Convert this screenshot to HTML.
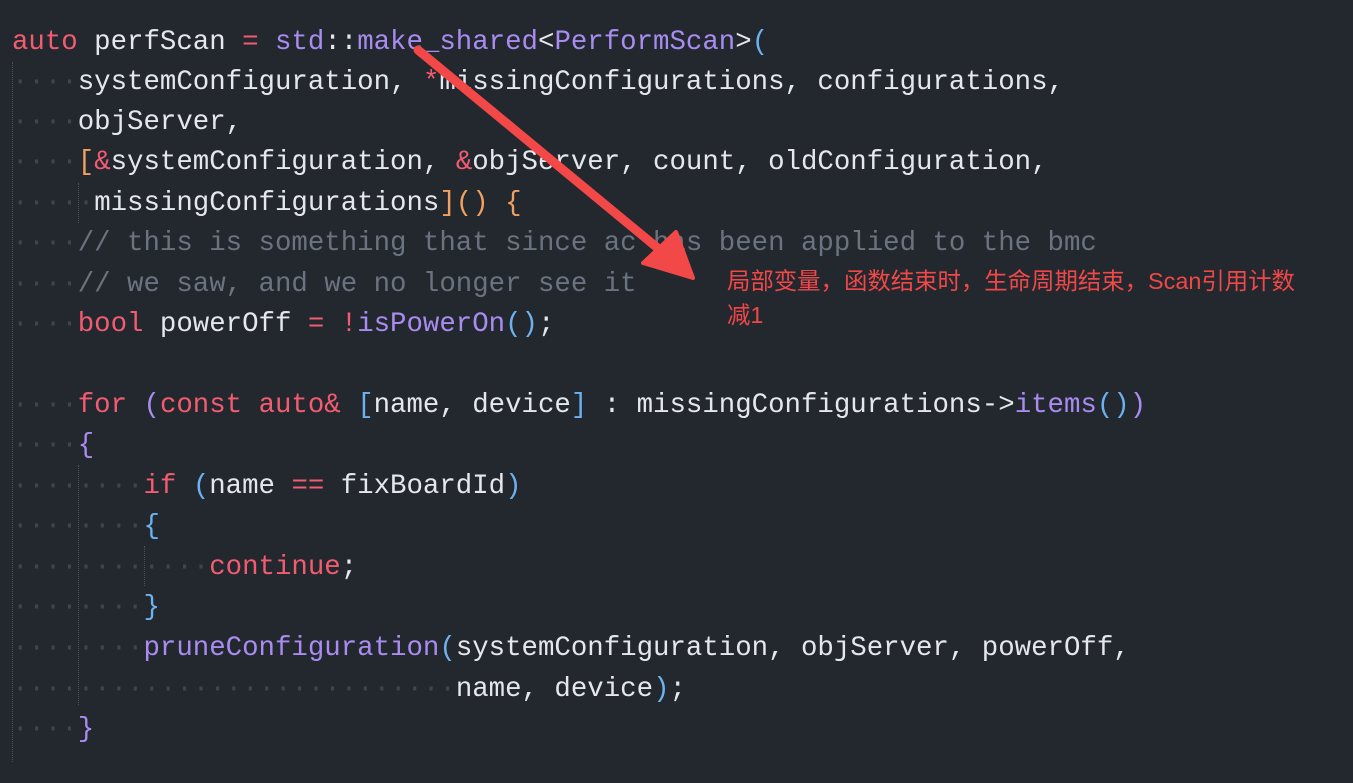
<!DOCTYPE html>
<html><head><meta charset="utf-8"><style>
html,body{margin:0;padding:0;background:#23272e;width:1353px;height:783px;overflow:hidden}
.c{position:absolute;left:12px;top:2px;font-family:"Liberation Mono",monospace;font-size:27.4px;color:#e4e7ec;white-space:pre}
.l{position:absolute;left:0;height:40px;line-height:40px}
.d{color:#3f444d}.k{color:#f25c71}.p{color:#a88cf0}.o{color:#f0a060}.b{color:#6cb2f0}.m{color:#6b7380}
.g{position:absolute;width:1px;border-left:1px dotted #4a4f58}
.note{position:absolute;left:727px;top:264px;color:#f04848;font-family:"Liberation Sans","Noto Sans CJK SC",sans-serif;font-size:23.4px;line-height:34px;width:640px}
</style></head><body>
<div class="c">
<div class="l" style="top:21px"><span class="k">auto</span> perfScan <span class="k">=</span> <span class="p">std</span>::<span class="p">make_shared</span>&lt;<span class="p">PerformScan</span>&gt;<span class="b">(</span></div>
<div class="l" style="top:61px"><span class="d">····</span>systemConfiguration, <span class="k">*</span>missingConfigurations, configurations,</div>
<div class="l" style="top:101px"><span class="d">····</span>objServer,</div>
<div class="l" style="top:141px"><span class="d">····</span><span class="o">[</span><span class="k">&amp;</span>systemConfiguration, <span class="k">&amp;</span>objServer, count, oldConfiguration,</div>
<div class="l" style="top:182px"><span class="d">·····</span>missingConfigurations<span class="o">]()</span> <span class="o">{</span></div>
<div class="l" style="top:222px"><span class="d">····</span><span class="m">// this is something that since ac has been applied to the bmc</span></div>
<div class="l" style="top:263px"><span class="d">····</span><span class="m">// we saw, and we no longer see it</span></div>
<div class="l" style="top:303px"><span class="d">····</span><span class="k">bool</span> powerOff <span class="k">=</span> <span class="k">!</span><span class="p">isPowerOn</span><span class="b">()</span>;</div>
<div class="l" style="top:384px"><span class="d">····</span><span class="k">for</span> <span class="p">(</span><span class="k">const</span> <span class="k">auto&amp;</span> <span class="b">[</span>name, device<span class="b">]</span> : missingConfigurations-&gt;<span class="p">items</span><span class="b">()</span><span class="p">)</span></div>
<div class="l" style="top:424px"><span class="d">····</span><span class="p">{</span></div>
<div class="l" style="top:465px"><span class="d">········</span><span class="k">if</span> <span class="b">(</span>name <span class="k">==</span> fixBoardId<span class="b">)</span></div>
<div class="l" style="top:505px"><span class="d">········</span><span class="b">{</span></div>
<div class="l" style="top:546px"><span class="d">············</span><span class="k">continue</span>;</div>
<div class="l" style="top:586px"><span class="d">········</span><span class="b">}</span></div>
<div class="l" style="top:627px"><span class="d">········</span><span class="p">pruneConfiguration</span><span class="b">(</span>systemConfiguration, objServer, powerOff,</div>
<div class="l" style="top:668px"><span class="d">···························</span>name, device<span class="b">)</span>;</div>
<div class="l" style="top:708px"><span class="d">····</span><span class="p">}</span></div>
</div>
<div class="g" style="left:12px;top:62px;height:700px"></div>
<div class="g" style="left:78px;top:183px;height:40px"></div>
<div class="g" style="left:78px;top:465px;height:240px"></div>
<div class="g" style="left:144px;top:546px;height:40px"></div>
<svg style="position:absolute;left:0;top:0" width="1353" height="783">
<line x1="418" y1="50" x2="660" y2="250" stroke="#f24848" stroke-width="9" stroke-linecap="round"/>
<polygon points="693,278 643,263 676,232" fill="#f24848" stroke="#f24848" stroke-width="4" stroke-linejoin="round"/>
</svg>
<div class="note">局部变量，函数结束时，生命周期结束，Scan引用计数<br>减1</div>
</body></html>
